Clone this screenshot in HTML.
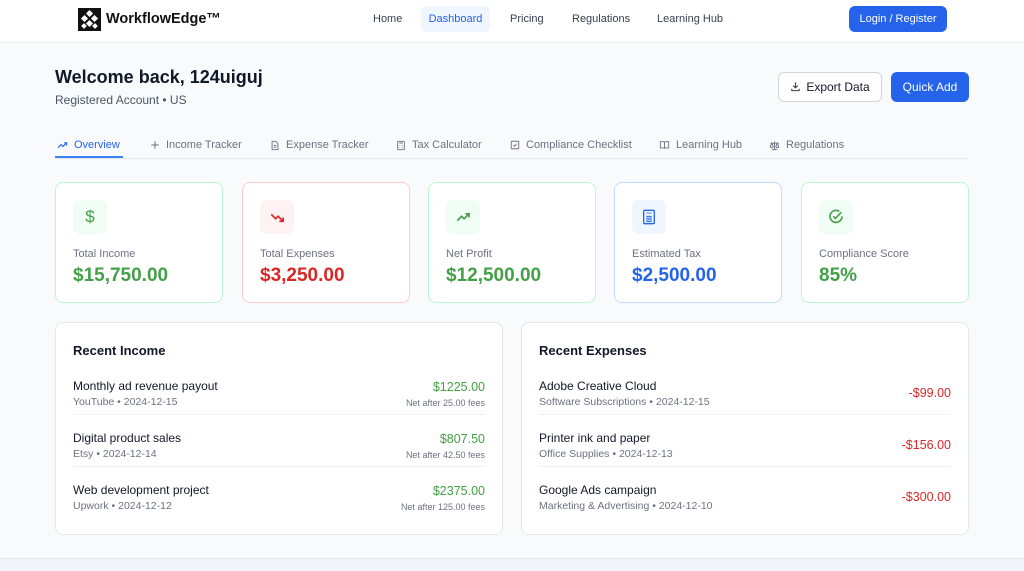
<!DOCTYPE html>
<html><head><meta charset="utf-8">
<style>
*{box-sizing:border-box;margin:0;padding:0}
body{width:1024px;height:571px;overflow:hidden;background:#f8fafc;font-family:"Liberation Sans",sans-serif;color:#111827;position:relative}
.abs{position:absolute}
.nav{left:0;top:0;width:1024px;height:43px;background:#fff;border-bottom:1px solid #eceef2}
.nl{position:absolute;top:6px;height:26px;line-height:27px;font-size:11px;color:#374151;padding:0 9px;border-radius:5px}
.btn{position:absolute;border-radius:6px;font-size:12px;text-align:center}
.tab{position:absolute;top:139px;font-size:11px;color:#6b7280;display:flex;align-items:center;gap:6px}
.card{position:absolute;top:182px;width:168px;height:121px;background:#fff;border-radius:8px;border:1.5px solid #bbf7d0}
.ib{position:absolute;left:17px;top:17px;width:34px;height:34px;border-radius:6px;display:flex;align-items:center;justify-content:center}
.lab{position:absolute;left:17px;top:65px;font-size:11px;color:#6b7280}
.val{position:absolute;left:17px;top:82px;font-size:19px;font-weight:bold}
.panel{position:absolute;top:322px;width:448px;height:213px;background:#fff;border:1px solid #e5e7eb;border-radius:8px}
.pt{position:absolute;left:17px;top:20px;font-size:13px;font-weight:bold;color:#111827}
.row{position:absolute;left:17px;right:17px;height:36px}
.rt{position:absolute;left:0;top:0;font-size:12px;color:#111827}
.rs{position:absolute;left:0;top:17px;font-size:10.5px;color:#6b7280}
.ra{position:absolute;right:0;top:1px;font-size:12.5px;color:#43a047;text-align:right}
.rf{position:absolute;right:0;top:19px;font-size:9px;color:#6b7280}
.re{position:absolute;right:0;top:7px;font-size:12.5px;color:#dc2626}
.sep{border-bottom:1px solid #eef0f3}
</style></head><body>
<div class="abs nav">
 <svg class="abs" style="left:78px;top:8px" width="23" height="23" viewBox="0 0 23 23"><rect width="23" height="23" fill="#111"/><g fill="#fff"><rect x="9" y="3" width="5" height="5" transform="rotate(45 11.5 5.5)"/><rect x="4" y="8" width="5" height="5" transform="rotate(45 6.5 10.5)"/><rect x="14" y="8" width="5" height="5" transform="rotate(45 16.5 10.5)"/><rect x="9" y="13" width="5" height="5" transform="rotate(45 11.5 15.5)"/><rect x="4" y="16" width="4" height="4" transform="rotate(45 6 18)"/><rect x="15" y="16" width="4" height="4" transform="rotate(45 17 18)"/></g></svg>
 <div class="abs" style="left:106px;top:11px;font-size:14.5px;font-weight:bold;color:#111">WorkflowEdge™</div>
 <div class="nl" style="left:364px">Home</div>
 <div class="nl" style="left:421px;width:69px;background:#eff6ff;color:#2563eb;text-align:center;padding:0">Dashboard</div>
 <div class="nl" style="left:501px">Pricing</div>
 <div class="nl" style="left:563px">Regulations</div>
 <div class="nl" style="left:648px">Learning Hub</div>
 <div class="btn" style="left:849px;top:6px;width:98px;height:26px;line-height:27px;background:#2563eb;color:#fff;font-size:11px">Login / Register</div>
</div>
<div class="abs" style="left:55px;top:67px;font-size:18px;font-weight:bold">Welcome back, 124uiguj</div>
<div class="abs" style="left:55px;top:93px;font-size:12px;color:#4b5563">Registered Account • US</div>
<div class="btn" style="left:778px;top:72px;width:104px;height:30px;line-height:28px;background:#fff;border:1px solid #d1d5db;color:#111827"><svg width="11" height="11" viewBox="0 0 24 24" fill="none" stroke="#374151" stroke-width="2.4" style="vertical-align:-1px;margin-right:5px"><path d="M12 3v12M7 10l5 5 5-5M4 17v4h16v-4"/></svg>Export Data</div>
<div class="btn" style="left:891px;top:72px;width:78px;height:30px;line-height:30px;background:#2563eb;color:#fff">Quick Add</div>

<div class="tab" style="left:57px;color:#2563eb"><svg width="11" height="11" viewBox="0 0 24 24" fill="none" stroke="#2563eb" stroke-width="2.4"><path d="M2 17l7-7 4 4 8-8M15 6h6v6"/></svg>Overview</div>
<div class="abs" style="left:55px;top:156px;width:68px;height:2px;background:#3b82f6"></div>
<div class="tab" style="left:150px"><svg width="10" height="10" viewBox="0 0 24 24" stroke="#6b7280" stroke-width="2.4"><path d="M12 3v18M3 12h18"/></svg>Income Tracker</div>
<div class="tab" style="left:270px"><svg width="10" height="11" viewBox="0 0 24 24" fill="none" stroke="#6b7280" stroke-width="2.2"><path d="M5 2h9l5 5v15H5zM9 12h6M9 16h6"/></svg>Expense Tracker</div>
<div class="tab" style="left:396px"><svg width="10" height="11" viewBox="0 0 24 24" fill="none" stroke="#6b7280" stroke-width="2.2"><rect x="4" y="2" width="16" height="20" rx="2"/><path d="M8 6h8M8 12h1M12 12h1M16 12h1M8 17h1M12 17h1M16 17h1"/></svg>Tax Calculator</div>
<div class="tab" style="left:510px"><svg width="10" height="10" viewBox="0 0 24 24" fill="none" stroke="#6b7280" stroke-width="2.2"><rect x="3" y="3" width="18" height="18" rx="2"/><path d="M8 12l3 3 5-6"/></svg>Compliance Checklist</div>
<div class="tab" style="left:659px"><svg width="11" height="10" viewBox="0 0 24 24" fill="none" stroke="#6b7280" stroke-width="2.2"><path d="M2 4h7a3 3 0 0 1 3 3v14a2 2 0 0 0-2-2H2zM22 4h-7a3 3 0 0 0-3 3v14a2 2 0 0 1 2-2h8z"/></svg>Learning Hub</div>
<div class="tab" style="left:769px"><svg width="11" height="11" viewBox="0 0 24 24" fill="none" stroke="#6b7280" stroke-width="2"><path d="M12 3v18M7 21h10M3 7h18M6 7l-3 7a3 3 0 0 0 6 0zM18 7l-3 7a3 3 0 0 0 6 0z"/></svg>Regulations</div>
<div class="abs" style="left:55px;top:158px;width:914px;height:1px;background:#e5e7eb"></div>

<div class="card" style="left:55px"><div class="ib" style="background:#f0fdf4;color:#43a047;font-size:17px">$</div><div class="lab">Total Income</div><div class="val" style="color:#43a047">$15,750.00</div></div>
<div class="card" style="left:242px;border-color:#fecaca"><div class="ib" style="background:#fef2f2"><svg width="15" height="15" viewBox="0 0 24 24" fill="none" stroke="#dc2626" stroke-width="2.6"><path d="M2 7l7 7 4-4 8 8M15 18h6v-6"/></svg></div><div class="lab">Total Expenses</div><div class="val" style="color:#dc2626">$3,250.00</div></div>
<div class="card" style="left:428px"><div class="ib" style="background:#f0fdf4"><svg width="15" height="15" viewBox="0 0 24 24" fill="none" stroke="#43a047" stroke-width="2.6"><path d="M2 17l7-7 4 4 8-8M15 6h6v6"/></svg></div><div class="lab">Net Profit</div><div class="val" style="color:#43a047">$12,500.00</div></div>
<div class="card" style="left:614px;border-color:#bfdbfe"><div class="ib" style="background:#eff6ff"><svg width="14" height="16" viewBox="0 0 20 24" fill="none" stroke="#2563eb" stroke-width="2"><rect x="2" y="2" width="16" height="20" rx="2"/><path d="M6 6h8M6 11h8M6 15h8M6 19h8M10 11v8M7 11v8M13 11v8" stroke-width="1.2"/></svg></div><div class="lab">Estimated Tax</div><div class="val" style="color:#2563eb">$2,500.00</div></div>
<div class="card" style="left:801px"><div class="ib" style="background:#f0fdf4"><svg width="16" height="16" viewBox="0 0 24 24" fill="none" stroke="#43a047" stroke-width="2.4"><path d="M21 11a9 9 0 1 1-4-7.4"/><path d="M8 11l3 3 9-9"/></svg></div><div class="lab">Compliance Score</div><div class="val" style="color:#43a047">85%</div></div>

<div class="panel" style="left:55px"><div class="pt">Recent Income</div>
 <div class="row sep" style="top:56px"><div class="rt">Monthly ad revenue payout</div><div class="rs">YouTube • 2024-12-15</div><div class="ra">$1225.00</div><div class="rf">Net after 25.00 fees</div></div>
 <div class="row sep" style="top:108px"><div class="rt">Digital product sales</div><div class="rs">Etsy • 2024-12-14</div><div class="ra">$807.50</div><div class="rf">Net after 42.50 fees</div></div>
 <div class="row" style="top:160px"><div class="rt">Web development project</div><div class="rs">Upwork • 2024-12-12</div><div class="ra">$2375.00</div><div class="rf">Net after 125.00 fees</div></div>
</div>
<div class="panel" style="left:521px"><div class="pt">Recent Expenses</div>
 <div class="row sep" style="top:56px"><div class="rt">Adobe Creative Cloud</div><div class="rs">Software Subscriptions • 2024-12-15</div><div class="re">-$99.00</div></div>
 <div class="row sep" style="top:108px"><div class="rt">Printer ink and paper</div><div class="rs">Office Supplies • 2024-12-13</div><div class="re">-$156.00</div></div>
 <div class="row" style="top:160px"><div class="rt">Google Ads campaign</div><div class="rs">Marketing &amp; Advertising • 2024-12-10</div><div class="re">-$300.00</div></div>
</div>
<div class="abs" style="left:0;top:558px;width:1024px;height:13px;background:#f1f5f9;border-top:1px solid #e5e7eb"></div>
</body></html>
